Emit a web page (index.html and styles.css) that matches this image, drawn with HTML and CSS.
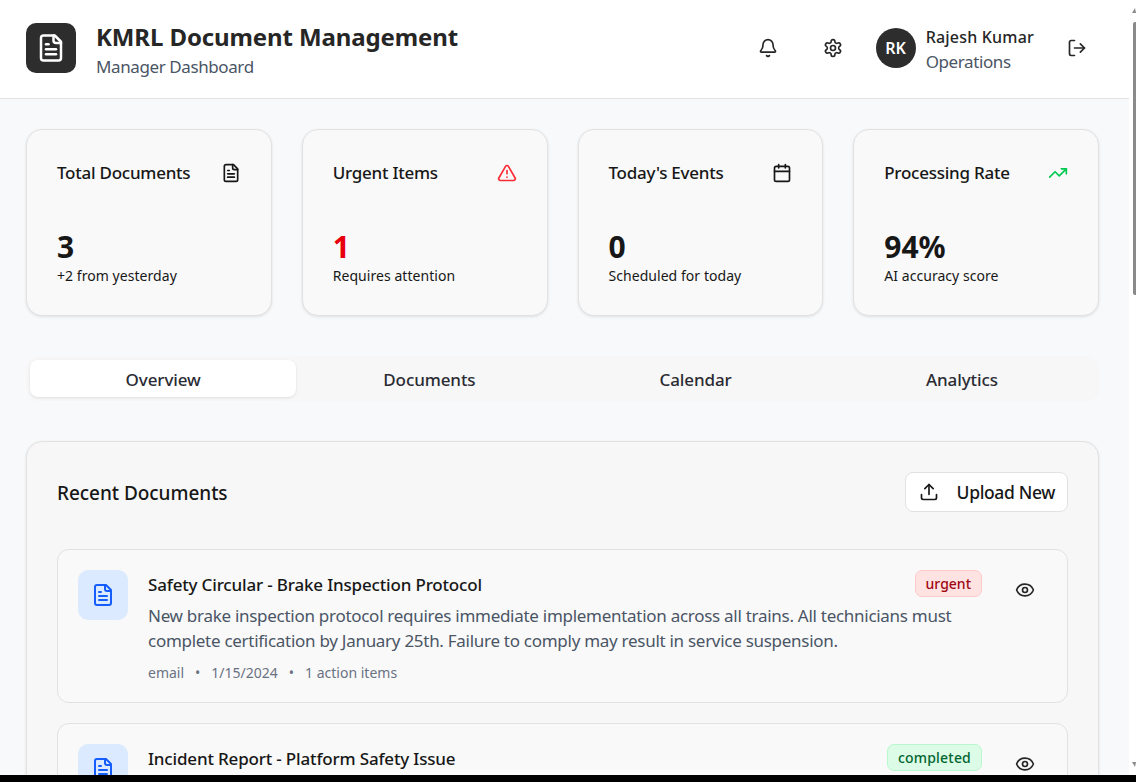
FILE: index.html
```html
<!DOCTYPE html>
<html>
<head>
  <title>KMRL Document Management</title>
  <link rel="stylesheet" href="styles.css">
</head>
<body>
  <svg class="sprite" xmlns="http://www.w3.org/2000/svg">
    <symbol id="i-file" viewBox="0 0 24 24"><path d="M15 2H6a2 2 0 0 0-2 2v16a2 2 0 0 0 2 2h12a2 2 0 0 0 2-2V7Z"/><path d="M14 2v4a2 2 0 0 0 2 2h4"/><path d="M10 9H8"/><path d="M16 13H8"/><path d="M16 17H8"/></symbol>
    <symbol id="i-bell" viewBox="0 0 24 24"><path d="M10.268 21a2 2 0 0 0 3.464 0"/><path d="M3.262 15.326A1 1 0 0 0 4 17h16a1 1 0 0 0 .74-1.673C19.41 13.956 18 12.499 18 8A6 6 0 0 0 6 8c0 4.499-1.411 5.956-2.738 7.326"/></symbol>
    <symbol id="i-settings" viewBox="0 0 24 24"><path d="M12.22 2h-.44a2 2 0 0 0-2 2v.18a2 2 0 0 1-1 1.73l-.43.25a2 2 0 0 1-2 0l-.15-.08a2 2 0 0 0-2.73.73l-.22.38a2 2 0 0 0 .73 2.73l.15.1a2 2 0 0 1 1 1.72v.51a2 2 0 0 1-1 1.74l-.15.09a2 2 0 0 0-.73 2.73l.22.38a2 2 0 0 0 2.73.73l.15-.08a2 2 0 0 1 2 0l.43.25a2 2 0 0 1 1 1.73V20a2 2 0 0 0 2 2h.44a2 2 0 0 0 2-2v-.18a2 2 0 0 1 1-1.73l.43-.25a2 2 0 0 1 2 0l.15.08a2 2 0 0 0 2.73-.73l.22-.39a2 2 0 0 0-.73-2.73l-.15-.08a2 2 0 0 1-1-1.74v-.5a2 2 0 0 1 1-1.74l.15-.09a2 2 0 0 0 .73-2.73l-.22-.38a2 2 0 0 0-2.73-.73l-.15.08a2 2 0 0 1-2 0l-.43-.25a2 2 0 0 1-1-1.73V4a2 2 0 0 0-2-2z"/><circle cx="12" cy="12" r="3"/></symbol>
    <symbol id="i-logout" viewBox="0 0 24 24"><path d="M9 21H5a2 2 0 0 1-2-2V5a2 2 0 0 1 2-2h4"/><polyline points="16 17 21 12 16 7"/><line x1="21" x2="9" y1="12" y2="12"/></symbol>
    <symbol id="i-alert" viewBox="0 0 24 24"><path d="m21.73 18-8-14a2 2 0 0 0-3.48 0l-8 14A2 2 0 0 0 4 21h16a2 2 0 0 0 1.73-3"/><path d="M12 9v4"/><path d="M12 17h.01"/></symbol>
    <symbol id="i-calendar" viewBox="0 0 24 24"><path d="M8 2v4"/><path d="M16 2v4"/><rect width="18" height="18" x="3" y="4" rx="2"/><path d="M3 10h18"/></symbol>
    <symbol id="i-trend" viewBox="0 0 24 24"><polyline points="22 7 13.5 15.5 8.5 10.5 2 17"/><polyline points="16 7 22 7 22 13"/></symbol>
    <symbol id="i-upload" viewBox="0 0 24 24"><path d="M21 15v4a2 2 0 0 1-2 2H5a2 2 0 0 1-2-2v-4"/><polyline points="17 8 12 3 7 8"/><line x1="12" x2="12" y1="3" y2="15"/></symbol>
    <symbol id="i-eye" viewBox="0 0 24 24"><path d="M2.062 12.348a1 1 0 0 1 0-.696 10.75 10.75 0 0 1 19.876 0 1 1 0 0 1 0 .696 10.75 10.75 0 0 1-19.876 0"/><circle cx="12" cy="12" r="3"/></symbol>
  </svg>

  <div class="window">
    <div class="page">
      <header class="topbar">
        <div class="brand">
          <div class="logo"><svg class="icon icon-logo"><use href="#i-file"/></svg></div>
          <div class="brand-text">
            <h1>KMRL Document Management</h1>
            <p class="subtitle">Manager Dashboard</p>
          </div>
        </div>
        <div class="user-area">
          <button class="icon-btn"><svg class="icon"><use href="#i-bell"/></svg></button>
          <button class="icon-btn"><svg class="icon"><use href="#i-settings"/></svg></button>
          <div class="user">
            <div class="avatar">RK</div>
            <div class="user-text">
              <div class="user-name">Rajesh Kumar</div>
              <div class="user-dept">Operations</div>
            </div>
          </div>
          <button class="icon-btn"><svg class="icon"><use href="#i-logout"/></svg></button>
        </div>
      </header>

      <main class="content">
        <section class="stats">
          <div class="stat-card">
            <div class="stat-head"><span>Total Documents</span><svg class="icon"><use href="#i-file"/></svg></div>
            <div class="stat-value">3</div>
            <div class="stat-note">+2 from yesterday</div>
          </div>
          <div class="stat-card">
            <div class="stat-head"><span>Urgent Items</span><svg class="icon icon-red"><use href="#i-alert"/></svg></div>
            <div class="stat-value value-red">1</div>
            <div class="stat-note">Requires attention</div>
          </div>
          <div class="stat-card">
            <div class="stat-head"><span>Today's Events</span><svg class="icon"><use href="#i-calendar"/></svg></div>
            <div class="stat-value">0</div>
            <div class="stat-note">Scheduled for today</div>
          </div>
          <div class="stat-card">
            <div class="stat-head"><span>Processing Rate</span><svg class="icon icon-green"><use href="#i-trend"/></svg></div>
            <div class="stat-value">94%</div>
            <div class="stat-note">AI accuracy score</div>
          </div>
        </section>

        <nav class="tabs">
          <button class="tab active">Overview</button>
          <button class="tab">Documents</button>
          <button class="tab">Calendar</button>
          <button class="tab">Analytics</button>
        </nav>

        <section class="panel">
          <div class="panel-head">
            <h2>Recent Documents</h2>
            <button class="upload-btn"><svg class="icon"><use href="#i-upload"/></svg>Upload New</button>
          </div>

          <div class="doc-list">
            <article class="doc">
              <div class="doc-icon"><svg class="icon icon-24"><use href="#i-file"/></svg></div>
              <div class="doc-body">
                <div class="doc-title-row">
                  <h3>Safety Circular - Brake Inspection Protocol</h3>
                  <span class="badge badge-urgent">urgent</span>
                </div>
                <p class="doc-text">New brake inspection protocol requires immediate implementation across all trains. All technicians must complete certification by January 25th. Failure to comply may result in service suspension.</p>
                <div class="doc-meta"><span>email</span><span>•</span><span>1/15/2024</span><span>•</span><span>1 action items</span></div>
              </div>
              <button class="icon-btn eye-btn"><svg class="icon"><use href="#i-eye"/></svg></button>
            </article>

            <article class="doc">
              <div class="doc-icon"><svg class="icon icon-24"><use href="#i-file"/></svg></div>
              <div class="doc-body">
                <div class="doc-title-row">
                  <h3>Incident Report - Platform Safety Issue</h3>
                  <span class="badge badge-completed">completed</span>
                </div>
              </div>
              <button class="icon-btn eye-btn"><svg class="icon"><use href="#i-eye"/></svg></button>
            </article>
          </div>
        </section>
      </main>
    </div>

    <div class="scrollbar">
      <span class="arrow arrow-up"></span>
      <div class="thumb"></div>
      <span class="arrow arrow-down"></span>
    </div>
  </div>
  <div class="bottom-strip"></div>
</body>
</html>
```

FILE: styles.css
```css
* {
  box-sizing: border-box;
}

html, body {
  height: 100%;
  overflow: hidden;
}

body {
  margin: 0;
  background-color: #000;
  color: #171717;
  font-family: "Noto Sans", "Open Sans", sans-serif;
}

.sprite {
  display: none;
}

h1, h2, h3, p {
  margin: 0;
}

button {
  font-family: inherit;
  border: none;
  background: none;
  cursor: pointer;
  color: inherit;
  padding: 0;
}

.icon {
  width: 20px;
  height: 20px;
  fill: none;
  stroke: currentColor;
  stroke-width: 2;
  stroke-linecap: round;
  stroke-linejoin: round;
  flex-shrink: 0;
}

.icon-24 {
  width: 24px;
  height: 24px;
}

.icon-logo {
  width: 30px;
  height: 30px;
}

.icon-red {
  color: #fb2c36;
}

.icon-green {
  color: #00c950;
}

.window {
  display: flex;
  height: 775px;
  overflow: hidden;
}

.page {
  flex: 1;
  min-width: 0;
  background-color: #f8f9fb;
}

/* header */
.topbar {
  height: 99px;
  display: flex;
  align-items: center;
  justify-content: space-between;
  padding: 0 32px 2px 26px;
  background-color: #fff;
  border-bottom: 1px solid #e2e2e2;
}

.brand {
  display: flex;
  align-items: center;
  gap: 20px;
}

.brand-text {
  padding-top: 4px;
}

.logo {
  width: 50px;
  height: 50px;
  border-radius: 10px;
  background-color: #2d2d2d;
  color: #fff;
  display: flex;
  align-items: center;
  justify-content: center;
}

h1 {
  font-size: 24px;
  font-weight: 700;
  line-height: 32px;
  letter-spacing: -0.11px;
  color: #262626;
}

.subtitle {
  margin-top: 1px;
  font-size: 17px;
  line-height: 26px;
  letter-spacing: -0.4px;
  color: #4a5565;
}

.user-area {
  display: flex;
  align-items: center;
}

.icon-btn {
  width: 40px;
  height: 40px;
  display: flex;
  align-items: center;
  justify-content: center;
  color: #262626;
}

.user-area .icon-btn + .icon-btn {
  margin-left: 25px;
}

.user {
  display: flex;
  align-items: center;
  gap: 10px;
  margin-left: 23px;
  margin-right: 23px;
}

.user-text {
  padding-top: 4px;
}

.avatar {
  width: 40px;
  height: 40px;
  border-radius: 50%;
  background-color: #2d2d2d;
  color: #fff;
  font-size: 16px;
  font-weight: 600;
  display: flex;
  align-items: center;
  justify-content: center;
}

.user-name {
  font-size: 16px;
  font-weight: 500;
  line-height: 24px;
  letter-spacing: 0.2px;
  color: #262626;
}

.user-dept {
  font-size: 17px;
  line-height: 26px;
  letter-spacing: -0.4px;
  color: #4a5565;
}

/* main area */
.content {
  padding: 30px 30px 0 26px;
}

.stats {
  display: grid;
  grid-template-columns: repeat(4, 1fr);
  gap: 30px;
}

.stat-card {
  height: 187px;
  padding: 30px;
  background-color: #f9f9f9;
  border: 1px solid #e2e2e2;
  border-radius: 16px;
  box-shadow: 0 1px 3px rgba(0, 0, 0, 0.1);
}

.stat-head {
  display: flex;
  align-items: center;
  justify-content: space-between;
  height: 24px;
  font-size: 17px;
  font-weight: 500;
  letter-spacing: -0.25px;
}

.stat-head .icon {
  margin-top: 2px;
}

.stat-value {
  margin-top: 45px;
  font-size: 30px;
  font-weight: 700;
  line-height: 36px;
}

.value-red {
  color: #e7000b;
}

.stat-note {
  margin-top: 1px;
  font-size: 14px;
  line-height: 20px;
  letter-spacing: 0.05px;
}

/* tabs */
.tabs {
  margin-top: 40px;
  height: 45px;
  padding: 4px;
  display: grid;
  grid-template-columns: repeat(4, 1fr);
  background-color: #f7f7f7;
  border-radius: 12px;
}

.tab {
  height: 37px;
  padding-top: 2px;
  font-size: 17px;
  font-weight: 500;
  letter-spacing: -0.1px;
  color: #2b2b33;
  border-radius: 8px;
}

.tab.active {
  background-color: #fff;
  box-shadow: 0 1px 3px rgba(0, 0, 0, 0.1);
}

/* recent documents */
.panel {
  margin-top: 40px;
  padding: 30px;
  background-color: #f7f7f7;
  border: 1px solid #e2e2e2;
  border-radius: 16px;
  box-shadow: 0 1px 3px rgba(0, 0, 0, 0.1);
}

.panel-head {
  display: flex;
  align-items: center;
  justify-content: space-between;
  height: 40px;
}

h2 {
  padding-top: 2px;
  font-size: 19px;
  font-weight: 500;
  letter-spacing: -0.05px;
}

.upload-btn {
  display: flex;
  align-items: center;
  gap: 18px;
  height: 40px;
  padding: 0 12px 0 13px;
  font-size: 17.5px;
  font-weight: 500;
  letter-spacing: -0.36px;
  background-color: #fff;
  border: 1px solid #e2e2e2;
  border-radius: 8px;
}

.doc-list {
  margin-top: 37px;
  display: flex;
  flex-direction: column;
  gap: 20px;
}

.doc {
  display: flex;
  align-items: flex-start;
  gap: 20px;
  padding: 20px 20px 19px;
  background-color: #f9f9f9;
  border: 1px solid #e2e2e2;
  border-radius: 12px;
}

.doc-icon {
  width: 50px;
  height: 50px;
  border-radius: 10px;
  background-color: #dbeafe;
  color: #155dfc;
  display: flex;
  align-items: center;
  justify-content: center;
  flex-shrink: 0;
}

.doc-body {
  flex: 1;
  min-width: 0;
}

.doc-title-row {
  display: flex;
  align-items: center;
  justify-content: space-between;
  height: 27px;
}

h3 {
  padding-top: 2px;
  font-size: 17px;
  font-weight: 500;
  letter-spacing: -0.17px;
}

.badge {
  height: 27px;
  padding: 0 10px;
  display: flex;
  align-items: center;
  font-size: 14px;
  font-weight: 500;
  border-radius: 7px;
  border: 1px solid;
}

.badge-urgent {
  background-color: #ffe2e2;
  border-color: #ffc9c9;
  color: #9f0712;
}

.badge-completed {
  background-color: #dcfce7;
  border-color: #b9f8cf;
  color: #016630;
  letter-spacing: 0.2px;
}

.doc-text {
  margin-top: 6px;
  font-size: 17px;
  line-height: 25px;
  letter-spacing: -0.28px;
  color: #4a5565;
}

.doc-meta {
  margin-top: 10px;
  display: flex;
  gap: 11px;
  font-size: 14px;
  line-height: 20px;
  color: #6a7282;
}

.eye-btn {
  margin: 0 2px 0 3px;
}

/* fake browser scrollbar, it is part of the screenshot */
.scrollbar {
  width: 7px;
  background-color: #fff;
  position: relative;
}

.thumb {
  position: absolute;
  top: 22px;
  right: 0;
  width: 3px;
  height: 273px;
  border-radius: 2px 0 0 2px;
  background-color: #8a8a8a;
}

.arrow {
  position: absolute;
  right: 0;
  width: 0;
  height: 0;
  border-left: 3px solid transparent;
  border-right: 1px solid transparent;
}

.arrow-up {
  top: 8px;
  border-bottom: 5px solid #8a8a8a;
}

.arrow-down {
  bottom: 8px;
  border-top: 5px solid #8a8a8a;
}

.bottom-strip {
  height: 7px;
  background-color: #000;
}
```
